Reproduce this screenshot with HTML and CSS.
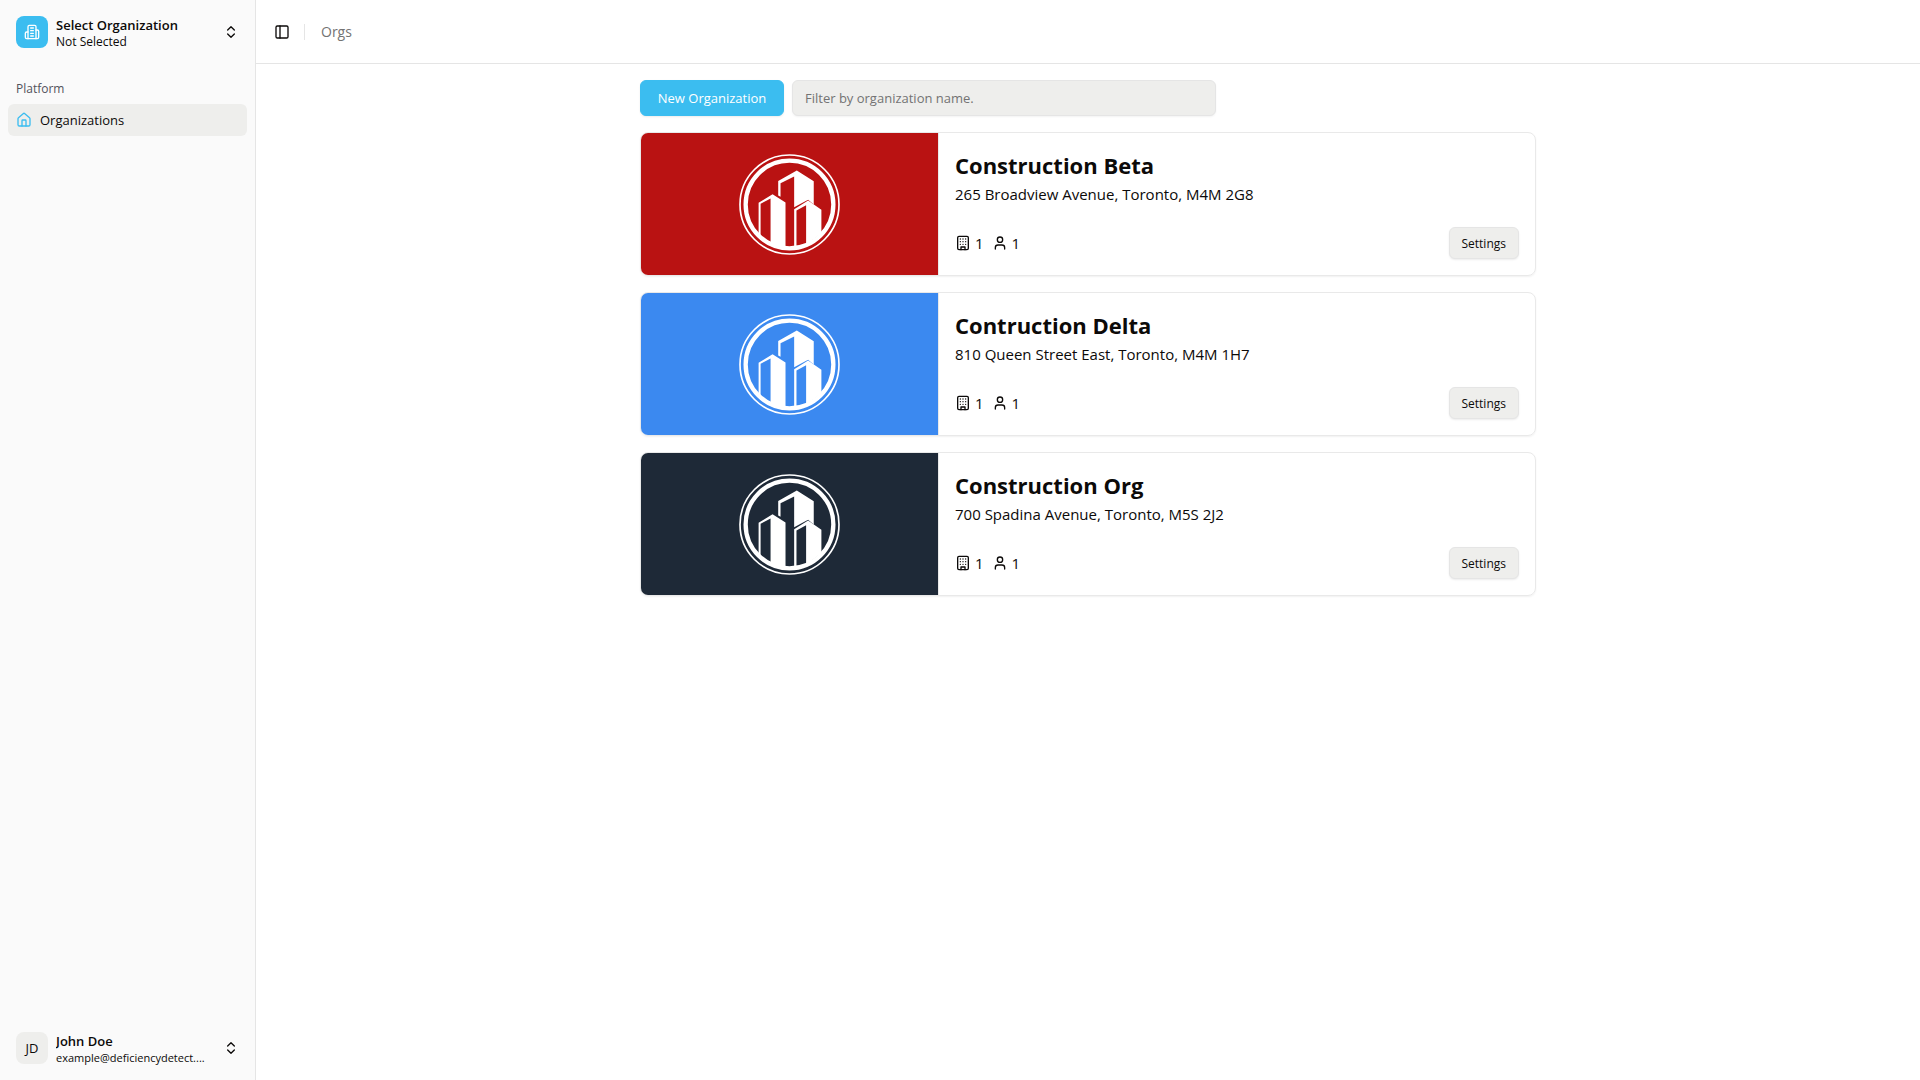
FILE: index.html
```
<!DOCTYPE html>
<html lang="en">
<head>
  <meta charset="UTF-8">
  <meta name="viewport" content="width=device-width, initial-scale=1">
  <title>Organizations</title>
  <link rel="stylesheet" href="styles.css">
</head>
<body>
  <!-- shared icons -->
  <svg class="sprite" aria-hidden="true">
    <symbol id="icon-chevrons" viewBox="0 0 24 24">
      <path d="m7 15 5 5 5-5"/>
      <path d="m7 9 5-5 5 5"/>
    </symbol>
    <symbol id="icon-building" viewBox="0 0 24 24">
      <rect width="16" height="20" x="4" y="2" rx="2" ry="2"/>
      <path d="M9 22v-4h6v4"/>
      <path d="M8 6h.01M16 6h.01M12 6h.01M12 10h.01M12 14h.01M16 10h.01M16 14h.01M8 10h.01M8 14h.01"/>
    </symbol>
    <symbol id="icon-user" viewBox="0 0 24 24">
      <path d="M19 21v-2a4 4 0 0 0-4-4H9a4 4 0 0 0-4 4v2"/>
      <circle cx="12" cy="7" r="4"/>
    </symbol>
    <symbol id="logo" viewBox="0 0 304 304">
      <circle cx="152" cy="152" r="149" fill="none" stroke="#fff" stroke-width="5"/>
      <circle cx="152" cy="152" r="132" fill="none" stroke="#fff" stroke-width="13"/>
      <g fill="#fff">
        <path d="M118 81 174 50 225 82V152L208 138 166 160V68L125 88V129L118 125Z"/>
        <path d="M59 147 101 121 140 146V281L95 271V134L65 150V245L59 239Z"/>
        <path d="M166 166 208 140 248 168V238L202 274V154L173 170V281H166Z"/>
      </g>
    </symbol>
  </svg>

  <div class="layout">
    <aside class="sidebar">
      <button class="account-btn" type="button">
        <span class="avatar avatar-org">
          <svg class="icon" viewBox="0 0 24 24">
            <path d="M6 22V4a2 2 0 0 1 2-2h8a2 2 0 0 1 2 2v18Z"/>
            <path d="M6 12H4a2 2 0 0 0-2 2v6a2 2 0 0 0 2 2h2"/>
            <path d="M18 9h2a2 2 0 0 1 2 2v9a2 2 0 0 1-2 2h-2"/>
            <path d="M10 6h4M10 10h4M10 14h4M10 18h4"/>
          </svg>
        </span>
        <span class="account-text">
          <span class="account-name">Select Organization</span>
          <span class="account-detail">Not Selected</span>
        </span>
        <svg class="icon"><use href="#icon-chevrons"/></svg>
      </button>

      <nav class="nav">
        <div class="nav-label">Platform</div>
        <a class="nav-link active" href="#">
          <svg class="icon" viewBox="0 0 24 24">
            <path d="M15 21v-8a1 1 0 0 0-1-1h-4a1 1 0 0 0-1 1v8"/>
            <path d="M3 10a2 2 0 0 1 .709-1.528l7-5.999a2 2 0 0 1 2.582 0l7 5.999A2 2 0 0 1 21 10v9a2 2 0 0 1-2 2H5a2 2 0 0 1-2-2z"/>
          </svg>
          <span>Organizations</span>
        </a>
      </nav>

      <button class="account-btn" type="button">
        <span class="avatar">JD</span>
        <span class="account-text">
          <span class="account-name">John Doe</span>
          <span class="account-detail account-email">example@deficiencydetect....</span>
        </span>
        <svg class="icon"><use href="#icon-chevrons"/></svg>
      </button>
    </aside>

    <div class="page">
      <header class="topbar">
        <button class="toggle-btn" type="button" aria-label="Toggle sidebar">
          <svg class="icon" viewBox="0 0 24 24">
            <rect width="18" height="18" x="3" y="3" rx="2"/>
            <path d="M9 3v18"/>
          </svg>
        </button>
        <span class="separator"></span>
        <a class="crumb" href="#">Orgs</a>
      </header>

      <main class="content">
        <div class="toolbar">
          <button class="btn btn-primary" type="button">New Organization</button>
          <input class="filter" type="text" placeholder="Filter by organization name." aria-label="Filter by organization name">
        </div>

        <article class="card">
          <div class="card-cover red">
            <svg class="logo"><use href="#logo"/></svg>
          </div>
          <div class="card-body">
            <h2>Construction Beta</h2>
            <p>265 Broadview Avenue, Toronto, M4M 2G8</p>
            <div class="card-footer">
              <span class="stat"><svg class="icon"><use href="#icon-building"/></svg>1</span>
              <span class="stat"><svg class="icon"><use href="#icon-user"/></svg>1</span>
              <button class="btn btn-small" type="button">Settings</button>
            </div>
          </div>
        </article>

        <article class="card">
          <div class="card-cover blue">
            <svg class="logo"><use href="#logo"/></svg>
          </div>
          <div class="card-body">
            <h2>Contruction Delta</h2>
            <p>810 Queen Street East, Toronto, M4M 1H7</p>
            <div class="card-footer">
              <span class="stat"><svg class="icon"><use href="#icon-building"/></svg>1</span>
              <span class="stat"><svg class="icon"><use href="#icon-user"/></svg>1</span>
              <button class="btn btn-small" type="button">Settings</button>
            </div>
          </div>
        </article>

        <article class="card">
          <div class="card-cover navy">
            <svg class="logo"><use href="#logo"/></svg>
          </div>
          <div class="card-body">
            <h2>Construction Org</h2>
            <p>700 Spadina Avenue, Toronto, M5S 2J2</p>
            <div class="card-footer">
              <span class="stat"><svg class="icon"><use href="#icon-building"/></svg>1</span>
              <span class="stat"><svg class="icon"><use href="#icon-user"/></svg>1</span>
              <button class="btn btn-small" type="button">Settings</button>
            </div>
          </div>
        </article>
      </main>
    </div>
  </div>
</body>
</html>
```
FILE: styles.css
```
* {
  box-sizing: border-box;
}
body {
  margin: 0;
  font-family: "Segoe UI", "Open Sans", sans-serif;
  font-size: 15px;
  line-height: 24px;
  color: #0c0a09;
  background: #fff;
}
button, input {
  font-family: inherit;
  color: inherit;
}
button {
  cursor: pointer;
}
a {
  color: inherit;
  text-decoration: none;
}
.sprite {
  display: none;
}
.icon {
  width: 16px;
  height: 16px;
  flex-shrink: 0;
  fill: none;
  stroke: currentColor;
  stroke-width: 2;
  stroke-linecap: round;
  stroke-linejoin: round;
}
.layout {
  display: flex;
  min-height: 100vh;
}

/* sidebar */
.sidebar {
  width: 256px;
  flex-shrink: 0;
  display: flex;
  flex-direction: column;
  padding: 8px;
  background: #fafafa;
  border-right: 1px solid #e5e5e5;
}
.account-btn {
  display: flex;
  align-items: center;
  gap: 8px;
  width: 100%;
  height: 48px;
  padding: 8px;
  border: none;
  border-radius: 6px;
  background: none;
  text-align: left;
}
.avatar {
  display: flex;
  align-items: center;
  justify-content: center;
  width: 32px;
  height: 32px;
  flex-shrink: 0;
  border-radius: 8px;
  background: #eeeeec;
  font-size: 13px;
}
.avatar-org {
  background: #3bbdf0;
  color: #fff;
}
.account-text {
  flex: 1;
  min-width: 0;
  padding-top: 4px;
}
.account-name, .account-detail {
  display: block;
  overflow: hidden;
  text-overflow: ellipsis;
  white-space: nowrap;
}
.account-name {
  font-size: 13px;
  font-weight: 600;
  line-height: 16px;
}
.account-detail {
  font-size: 12px;
  line-height: 18px;
}
.account-email {
  font-size: 11px;
}
.nav {
  flex: 1;
  padding-top: 16px;
}
.nav-label {
  display: flex;
  align-items: center;
  height: 32px;
  padding: 2px 8px 0;
  font-size: 12px;
  color: #52525b;
}
.nav-link {
  display: flex;
  align-items: center;
  gap: 8px;
  height: 32px;
  padding: 8px;
  border-radius: 6px;
  font-size: 13px;
}
.nav-link.active {
  background: #eeeeec;
}
.nav-link .icon {
  color: #3bbdf0;
}

/* main area */
.page {
  flex: 1;
  min-width: 0;
}
.topbar {
  display: flex;
  align-items: center;
  height: 64px;
  padding: 0 12px;
  border-bottom: 1px solid #e5e5e5;
}
.toggle-btn {
  display: flex;
  align-items: center;
  justify-content: center;
  width: 28px;
  height: 28px;
  padding: 0;
  border: none;
  background: none;
}
.separator {
  width: 1px;
  height: 16px;
  margin: 0 16px 0 8px;
  background: #e5e5e5;
}
.crumb {
  font-size: 14px;
  color: #737373;
}
.content {
  display: flex;
  flex-direction: column;
  gap: 16px;
  max-width: 928px;
  margin: 0 auto;
  padding: 16px;
}
.toolbar {
  display: flex;
  gap: 8px;
}
.btn {
  height: 36px;
  padding: 0 12px;
  border: 1px solid #e5e5e5;
  border-radius: 6px;
  background: #eeeeec;
  font-size: 13px;
  white-space: nowrap;
  box-shadow: 0 1px 2px rgba(0, 0, 0, 0.08);
}
.btn-primary {
  min-width: 144px;
  border-color: #3bbdf0;
  background: #3bbdf0;
  color: #fff;
}
.btn-small {
  height: 32px;
  margin-left: auto;
  font-size: 12px;
}
.filter {
  flex: 0 1 424px;
  min-width: 0;
  height: 36px;
  padding: 0 12px;
  border: 1px solid #e5e5e5;
  border-radius: 6px;
  background: #eeeeec;
  font-size: 13px;
  box-shadow: 0 1px 2px rgba(0, 0, 0, 0.05);
}
.filter::placeholder {
  color: #737373;
}

/* organization cards */
.card {
  display: grid;
  grid-template-columns: 1fr 2fr;
  min-height: 144px;
  overflow: hidden;
  border: 1px solid #e9e9e9;
  border-radius: 8px;
  box-shadow: 0 1px 2px rgba(0, 0, 0, 0.06);
}
.card-cover {
  display: flex;
  align-items: center;
  justify-content: center;
  border-right: 1px solid #e9e9e9;
}
.red {
  background: #b91212;
}
.blue {
  background: #3b89f0;
}
.navy {
  background: #1e2937;
}
.logo {
  width: 101px;
  height: 101px;
}
.card-body {
  display: flex;
  flex-direction: column;
  padding: 16px;
}
.card-body h2 {
  margin: 0;
  font-size: 22px;
  line-height: 33px;
}
.card-body p {
  margin: 0;
}
.card-footer {
  display: flex;
  align-items: center;
  gap: 8px;
  margin-top: auto;
}
.stat {
  display: flex;
  align-items: center;
  gap: 4px;
}
```
